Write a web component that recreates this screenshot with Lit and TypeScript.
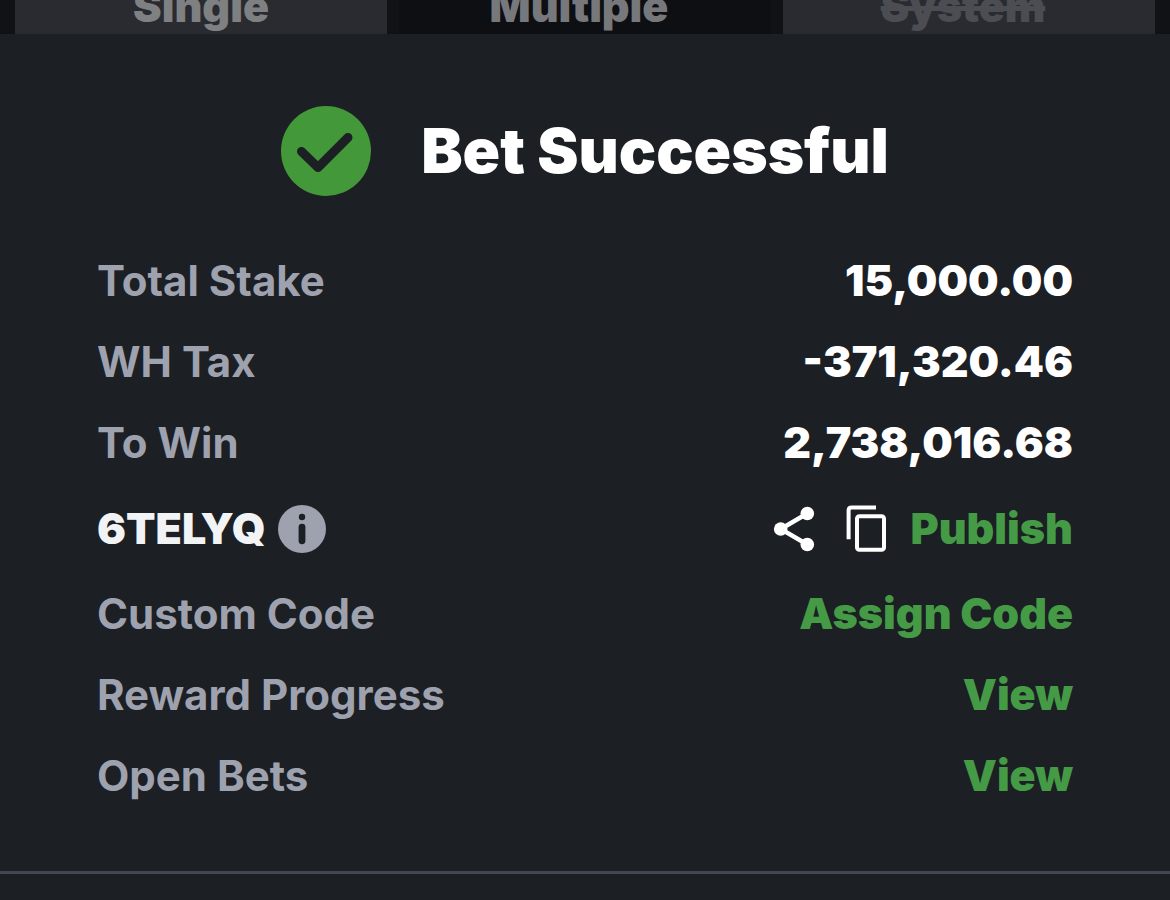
import { LitElement, html, css, svg, nothing } from "lit";
import { customElement } from "lit/decorators.js";
import { classMap } from "lit/directives/class-map.js";

interface Tab {
  label: string;
  selected?: boolean;
  disabled?: boolean;
}

const TABS: Tab[] = [
  { label: "Single" },
  { label: "Multiple", selected: true },
  { label: "System", disabled: true },
];

const AMOUNTS = [
  { label: "Total Stake", value: "15,000.00" },
  { label: "WH Tax", value: "-371,320.46" },
  { label: "To Win", value: "2,738,016.68" },
];

const ACTIONS = [
  { label: "Custom Code", action: "Assign Code" },
  { label: "Reward Progress", action: "View" },
  { label: "Open Bets", action: "View" },
];

const checkIcon = svg`<svg class="check" viewBox="0 0 90 90" aria-hidden="true">
  <circle cx="45" cy="45" r="45" fill="#43983a" />
  <path d="M20.5 45.5 L37 61.5 L67 31.5" fill="none" stroke="#1c1f24" stroke-width="9"
    stroke-linecap="round" stroke-linejoin="round" />
</svg>`;

const infoIcon = svg`<svg class="glyph" width="48" height="50" viewBox="0 -2 48 50" aria-hidden="true">
  <circle cx="24" cy="24" r="24" fill="#9ea1ae" />
  <circle cx="24" cy="12" r="3.2" fill="#1c1f24" />
  <rect x="20.6" y="18.8" width="6.8" height="20.4" rx="3.4" fill="#1c1f24" />
</svg>`;

const shareIcon = svg`<svg class="glyph" width="42" height="50" viewBox="0 -2 42 50" aria-hidden="true">
  <path d="M34.3 8.5 L7.7 24 L34.3 39.5" fill="none" stroke="#fff" stroke-width="4.4" />
  <circle cx="7.7" cy="24" r="6.8" fill="#fff" />
  <circle cx="34.3" cy="8.5" r="6.8" fill="#fff" />
  <circle cx="34.3" cy="39.5" r="6.8" fill="#fff" />
</svg>`;

const copyIcon = svg`<svg class="glyph" width="42" height="50" viewBox="0 -2 42 50" aria-hidden="true">
  <path d="M3.6 34.2 V5.6 Q3.6 2.6 6.6 2.6 H31" fill="none" stroke="#fff" stroke-width="4" />
  <rect x="12" y="11.2" width="27" height="33.6" rx="2.4" fill="none" stroke="#fff" stroke-width="4" />
</svg>`;

@customElement("app-root")
export class AppRoot extends LitElement {
  static styles = css`
    :host {
      display: block;
      min-height: 100vh;
      background: #1c1f24;
      color: #fff;
      font-family: Inter, "Noto Sans", sans-serif;
      font-size: 42px;
      line-height: 51px;
    }
    button {
      margin: 0;
      padding: 0;
      border: 0;
      background: none;
      color: inherit;
      font: inherit;
      cursor: pointer;
    }
    .tabs {
      display: grid;
      grid-template-columns: repeat(3, minmax(0, 1fr));
      align-content: end;
      gap: 12px;
      height: 34px;
      padding: 0 15px;
      overflow: hidden;
      background: #111216;
    }
    .tab {
      background: #2a2b30;
      color: #7f8082;
      font-size: 43px;
      font-weight: 900;
      line-height: 55px;
    }
    .tab + .tab {
      padding-right: 12px;
    }
    .tab.selected {
      background: #0e0f13;
      color: #77787b;
    }
    .tab.disabled {
      color: #4b4d53;
      text-decoration: line-through 5px;
    }
    .banner {
      display: flex;
      align-items: center;
      justify-content: center;
      gap: 50px;
      padding: 72px 24px 59px;
    }
    .check {
      display: block;
      width: 90px;
      height: 90px;
    }
    .title {
      margin: 0;
      font-size: 62px;
      font-weight: 900;
      line-height: 76px;
    }
    .rows {
      display: flex;
      flex-direction: column;
      gap: 30px;
      margin: 0;
      padding: 0 97px 70px;
    }
    .row {
      display: flex;
      align-items: center;
      justify-content: space-between;
    }
    .row.code {
      min-height: 60px;
    }
    .label {
      color: #9ea1ae;
      font-weight: 700;
    }
    .value,
    .booking,
    .tools {
      margin: 0;
      font-size: 43px;
      font-weight: 900;
    }
    .booking,
    .tools {
      display: flex;
      align-items: center;
    }
    .booking {
      gap: 12px;
      color: #f2f3f5;
    }
    .tools {
      gap: 23px;
    }
    .tool {
      display: flex;
    }
    .tool.share {
      margin-right: 7px;
    }
    .glyph {
      display: block;
    }
    .link {
      display: block;
      color: #459a45;
    }
    .rule {
      margin: 0;
      border: 0;
      border-top: 3px solid #444752;
    }
  `;

  render() {
    return html`
      <nav class="tabs" role="tablist" aria-label="Bet type">
        ${TABS.map(
          (tab) => html`<button
            class=${classMap({ tab: true, selected: !!tab.selected, disabled: !!tab.disabled })}
            role="tab"
            aria-selected=${tab.selected ? "true" : "false"}
            aria-disabled=${tab.disabled ? "true" : nothing}
          >${tab.label}</button>`
        )}
      </nav>
      <main>
        <header class="banner">
          ${checkIcon}
          <h1 class="title">Bet Successful</h1>
        </header>
        <dl class="rows">
          ${AMOUNTS.map(
            (row) => html`<div class="row">
              <dt class="label">${row.label}</dt>
              <dd class="value">${row.value}</dd>
            </div>`
          )}
          <div class="row code">
            <dt class="booking">
              <span>6TELYQ</span>
              <button class="tool" aria-label="About booking codes">${infoIcon}</button>
            </dt>
            <dd class="tools">
              <button class="tool share" aria-label="Share">${shareIcon}</button>
              <button class="tool" aria-label="Copy code">${copyIcon}</button>
              <button class="link">Publish</button>
            </dd>
          </div>
          ${ACTIONS.map(
            (row) => html`<div class="row">
              <dt class="label">${row.label}</dt>
              <dd class="value"><button class="link">${row.action}</button></dd>
            </div>`
          )}
        </dl>
        <hr class="rule" />
      </main>
    `;
  }
}
